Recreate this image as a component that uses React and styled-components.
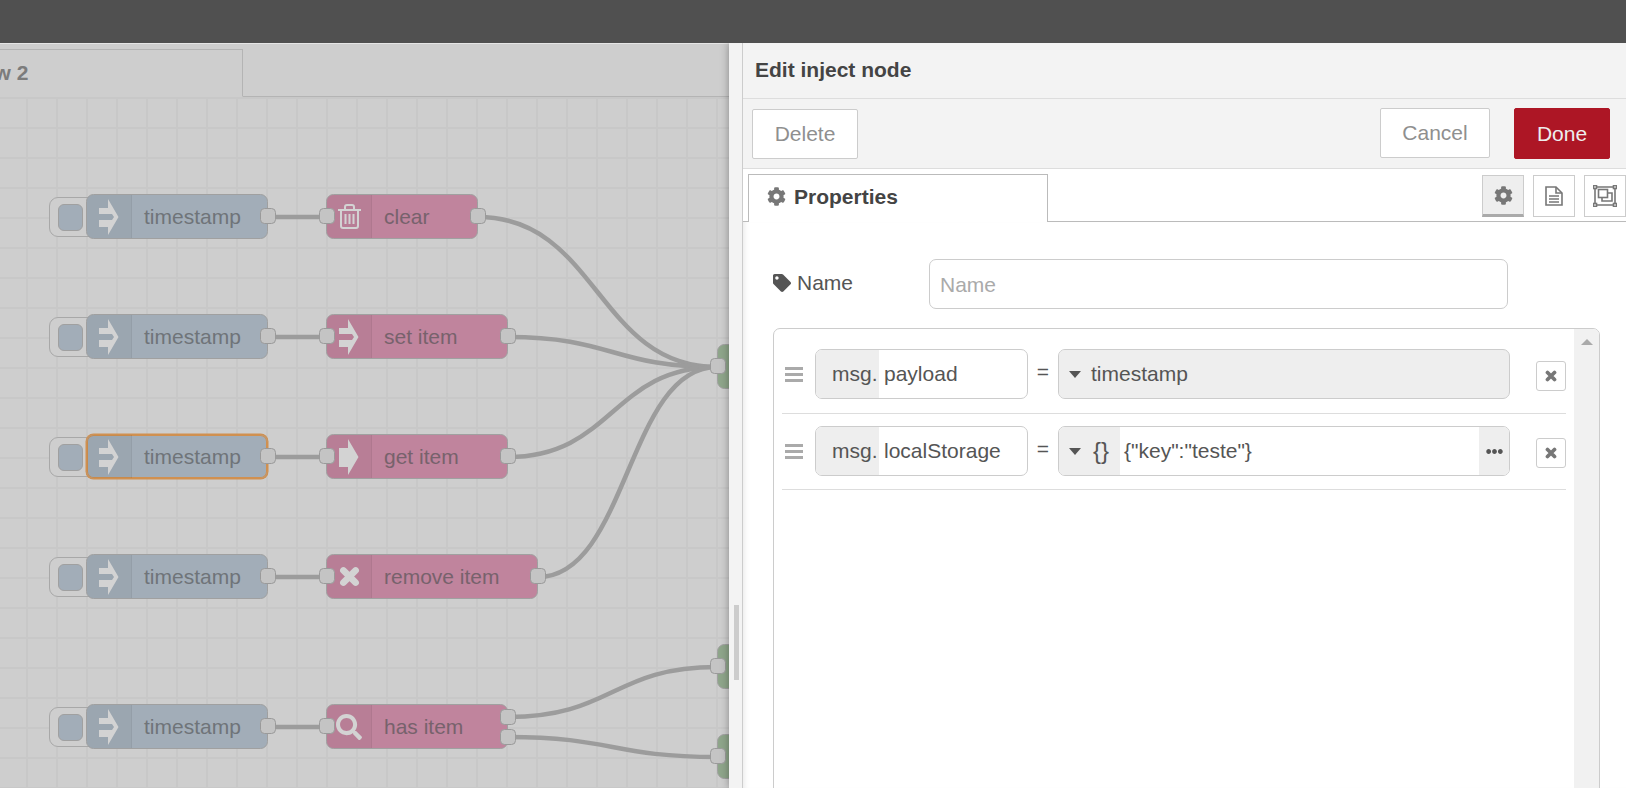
import React from 'react'
import styled, { createGlobalStyle } from 'styled-components'
import { FaCog, FaTag, FaSearch, FaEllipsisH } from 'react-icons/fa'

const GlobalStyle = createGlobalStyle`
  html, body { margin: 0; padding: 0; background: #fff; }
  body { font-family: "Liberation Sans", Arial, sans-serif; font-size: 21px; color: #555; }
  * { box-sizing: border-box; }
`

const Page = styled.div`
  width: 1626px;
  height: 788px;
  overflow: hidden;
  display: flex;
  flex-direction: column;
`

const TopBar = styled.div`
  height: 43px;
  flex: none;
  background: #505050;
  position: relative;
  z-index: 3;
`

const Main = styled.div`
  flex: 1;
  display: flex;
  min-height: 0;
`

const Workspace = styled.div`
  width: 729px;
  flex: none;
  display: flex;
  flex-direction: column;
  overflow: hidden;
  background: #cecece;
`

const TabBar = styled.div`
  height: 54px;
  flex: none;
  padding-top: 5px;
  border-top: 1px solid #e6e6e6;
  border-bottom: 1px solid #b4b4b4;
  display: flex;
`

const FlowTab = styled.div`
  width: 293px;
  margin-left: -50px;
  padding-left: 12px;
  height: 48px;
  border: 1px solid #b4b4b4;
  border-bottom: 1px solid #cecece;
  font-weight: bold;
  color: #7c7c7c;
  display: flex;
  align-items: center;
`

const Chart = styled.div`
  position: relative;
  flex: 1;
  background-color: #cecece;
  background-image:
    linear-gradient(to right, #c8c8c8 2px, transparent 2px),
    linear-gradient(to bottom, #c8c8c8 2px, transparent 2px);
  background-size: 30px 30px;
  background-position: 26px 0;
`

const Wires = styled.svg`
  position: absolute;
  left: 0;
  top: 0;
  width: 729px;
  height: 691px;
`

const Wire = styled.path`
  fill: none;
  stroke: #9c9c9c;
  stroke-width: 4.5px;
`

const FlowNode = styled.div`
  position: absolute;
  left: ${(p) => p.$x}px;
  top: ${(p) => p.$y - 97}px;
  width: ${(p) => p.$w}px;
  height: 45px;
  display: flex;
  align-items: center;
  background: ${(p) => p.$color};
  border: 1.5px solid ${(p) => (p.$selected ? '#d09050' : '#a0a0a0')};
  box-shadow: ${(p) => (p.$selected ? 'inset 0 0 0 1px #d09050, 0 0 0 0.5px #d09050' : 'none')};
  border-radius: 7.5px;
`

const NodeIcon = styled.div`
  width: 45px;
  height: 100%;
  flex: none;
  display: flex;
  align-items: center;
  justify-content: center;
  color: #d3d3d3;
  background: rgba(0, 0, 0, 0.04);
  border-right: 1.5px solid rgba(0, 0, 0, 0.05);
  border-radius: 6px 0 0 6px;
`

const NodeLabel = styled.span`
  padding-left: 12px;
  white-space: nowrap;
  color: ${(p) => (p.$pink ? '#77626c' : '#6f7479')};
`

const Port = styled.div`
  position: absolute;
  ${(p) => (p.$side === 'in' ? 'left: -8.5px;' : 'right: -8.5px;')}
  top: ${(p) => p.$top}px;
  width: 16px;
  height: 16px;
  background: #c4c4c4;
  border: 1.5px solid #9a9a9a;
  border-radius: 4.5px;
`

const InjectButton = styled.div`
  position: absolute;
  left: 49px;
  top: ${(p) => p.$y - 97 + 3}px;
  width: 50px;
  height: 40px;
  padding: 6px 0 0 8px;
  border: 1.5px solid #a8a8a8;
  border-radius: 9px 0 0 9px;
  background: #cecece;
`

const InjectSquare = styled.div`
  width: 25px;
  height: 27px;
  background: #a2adb8;
  border: 1.5px solid #a0a0a0;
  border-radius: 6px;
`

const Panel = styled.div`
  flex: 1;
  display: flex;
  position: relative;
  z-index: 2;
  box-shadow: 0 0 8px rgba(0, 0, 0, 0.35);
`

const Splitter = styled.div`
  width: 14px;
  flex: none;
  background: #f3f3f3;
  border-right: 1px solid #ccc;
  padding: 562px 0 0 5px;
`

const SplitterHandle = styled.div`
  width: 5px;
  height: 75px;
  background: #ccc;
`

const Tray = styled.div`
  flex: 1;
  min-width: 0;
  display: flex;
  flex-direction: column;
  background: #fff;
`

const TrayTitle = styled.div`
  height: 56px;
  flex: none;
  padding: 0 0 2px 12px;
  display: flex;
  align-items: center;
  font-weight: bold;
  color: #444;
  background: #f3f3f3;
  border-bottom: 1px solid #ddd;
`

const TrayToolbar = styled.div`
  height: 70px;
  flex: none;
  display: flex;
  justify-content: space-between;
  padding: 9px 16px 0 9px;
  background: #f3f3f3;
  border-bottom: 1px solid #ddd;
`

const ToolbarGroup = styled.div`
  display: flex;
  gap: 24px;
`

const TrayButton = styled.div`
  width: ${(p) => p.$w}px;
  height: ${(p) => (p.$primary ? 51 : 50)}px;
  margin-top: ${(p) => p.$top || 0}px;
  display: flex;
  align-items: center;
  justify-content: center;
  background: ${(p) => (p.$primary ? '#ad1625' : '#fff')};
  color: ${(p) => (p.$primary ? '#eee' : '#8f8f8f')};
  border: 1px solid ${(p) => (p.$primary ? '#ad1625' : '#ccc')};
  border-radius: 2px;
`

const TabRow = styled.div`
  height: 53px;
  flex: none;
  display: flex;
  justify-content: space-between;
  padding: 5px 0 0 5px;
  border-bottom: 1.5px solid #bbb;
`

const PropsTab = styled.div`
  width: 300px;
  height: 48px;
  display: flex;
  align-items: center;
  gap: 8px;
  padding: 0 0 4px 18px;
  font-weight: bold;
  color: #444;
  background: #fff;
  border: 1px solid #bbb;
  border-bottom: none;
  svg { color: #777; }
`

const TabButtons = styled.div`
  display: flex;
  gap: 9px;
  padding-top: 1px;
`

const TabButton = styled.div`
  width: 42px;
  height: 42px;
  display: flex;
  align-items: center;
  justify-content: center;
  color: #777;
  background: ${(p) => (p.$active ? '#eee' : '#fff')};
  border: 1px solid #ccc;
  border-bottom: ${(p) => (p.$active ? '3px solid #aaa' : '1px solid #ccc')};
`

const Form = styled.div`
  flex: 1;
  min-height: 0;
  padding: 37px 26px 0 30px;
  box-shadow: inset 6px 0 6px -5px rgba(0, 0, 0, 0.1);
`

const NameRow = styled.div`
  display: flex;
  align-items: center;
  margin-bottom: 19px;
`

const NameLabel = styled.label`
  width: 156px;
  display: flex;
  align-items: center;
  gap: 6px;
  padding-bottom: 3px;
  color: #555;
`

const NameInput = styled.div`
  width: 579px;
  height: 50px;
  padding: 2px 0 0 10px;
  display: flex;
  align-items: center;
  color: #aaa;
  border: 1px solid #ccc;
  border-radius: 7px;
`

const ListBox = styled.div`
  height: 500px;
  display: flex;
  border: 1px solid #ccc;
  border-radius: 7px;
  overflow: hidden;
`

const ListBody = styled.div`
  flex: 1;
  padding: 9px 8px 0 8px;
`

const ScrollTrack = styled.div`
  width: 25px;
  flex: none;
  padding: 10px 0 0 7px;
  background: #f1f1f1;
`

const ScrollArrow = styled.div`
  width: 0;
  height: 0;
  border-left: 6px solid transparent;
  border-right: 6px solid transparent;
  border-bottom: 6px solid #aaa;
`

const Row = styled.div`
  height: 76px;
  display: flex;
  align-items: flex-start;
  padding: ${(p) => (p.$first ? 11 : 12)}px 0 0 3px;
  border-bottom: 1px solid #ddd;
`

const Grip = styled.div`
  width: 18px;
  margin: 18px 12px 0 0;
  flex: none;
  display: flex;
  flex-direction: column;
  gap: 3px;
`

const GripBar = styled.span`
  display: block;
  height: 3px;
  background: #aaa;
`

const Field = styled.div`
  width: ${(p) => p.$w}px;
  height: 50px;
  flex: none;
  display: flex;
  align-items: stretch;
  overflow: hidden;
  color: #555;
  background: ${(p) => (p.$filled ? '#eee' : '#fff')};
  border: 1px solid #ccc;
  border-radius: 7px;
`

const MsgPrefix = styled.span`
  width: 63px;
  flex: none;
  padding-left: 16px;
  display: flex;
  align-items: center;
  background: #eee;
`

const FieldText = styled.span`
  flex: 1;
  padding-left: ${(p) => p.$pad}px;
  display: flex;
  align-items: center;
  white-space: nowrap;
`

const Equals = styled.span`
  width: 30px;
  flex: none;
  height: 50px;
  padding-bottom: 4px;
  display: flex;
  align-items: center;
  justify-content: center;
  color: #555;
`

const TypeSelect = styled.span`
  flex: none;
  width: ${(p) => p.$w}px;
  padding-left: 10px;
  display: flex;
  align-items: center;
  gap: 12px;
  font-size: 24px;
  background: #eee;
`

const Caret = styled.span`
  width: 0;
  height: 0;
  flex: none;
  border-left: 6.5px solid transparent;
  border-right: 6.5px solid transparent;
  border-top: 7px solid #555;
`

const ExpandButton = styled.span`
  width: 30px;
  flex: none;
  padding-left: 1px;
  display: flex;
  align-items: center;
  justify-content: center;
  color: #555;
  background: #eee;
`

const RemoveButton = styled.div`
  width: 30px;
  height: 30px;
  margin: 12px 0 0 26px;
  flex: none;
  display: flex;
  align-items: center;
  justify-content: center;
  color: #777;
  border: 1px solid #ccc;
  border-radius: 3px;
`

const ArrowIcon = ({ solid }) => (
  <svg width="20" height="36" viewBox="0 0 20 36" fill="currentColor">
    <path d={solid
      ? 'M0 9H9V0L19.5 18L9 36V28H0Z'
      : 'M0 9H9V0L19.5 18L9 36V28H0V21H13L15 18L13 15H0Z'} />
  </svg>
)

const TimesIcon = ({ size }) => (
  <svg width={size} height={size} viewBox="0 0 24 24" fill="none" stroke="currentColor" strokeWidth="7.5" strokeLinecap="round">
    <path d="M5 5L19 19M19 5L5 19" />
  </svg>
)

const TrashIcon = () => (
  <svg width="23" height="25" viewBox="0 0 23 25" fill="none" stroke="currentColor" strokeWidth="2">
    <path d="M0 6H23M7 6V3Q7 1 9 1H14Q16 1 16 3V6" />
    <path d="M3 6V22Q3 24 5 24H18Q20 24 20 22V6" />
    <path d="M7.5 10V20M11.5 10V20M15.5 10V20" />
  </svg>
)

const DocIcon = () => (
  <svg width="18" height="20" viewBox="0 0 18 20" fill="none" stroke="currentColor" strokeWidth="1.6">
    <path d="M1 1H11L17 7V19H1Z" />
    <path d="M11 1V7H17" />
    <path d="M4 10H14M4 13H14M4 16H14" />
  </svg>
)

const FrameIcon = () => (
  <svg width="24" height="22" viewBox="0 0 24 22" fill="none" stroke="currentColor" strokeWidth="1.6">
    <path d="M3 2H21M3 20H21M2 3V19M22 3V19" />
    <rect x="0.5" y="0.5" width="3" height="3" />
    <rect x="20.5" y="0.5" width="3" height="3" />
    <rect x="0.5" y="18.5" width="3" height="3" />
    <rect x="20.5" y="18.5" width="3" height="3" />
    <rect x="5.5" y="4.5" width="9" height="8" />
    <path d="M14.5 8H19V16H9V12.5" />
  </svg>
)

const BLUE = '#a2adb8'
const PINK = '#c0849d'
const GREEN = '#8ea58a'

const nodeRows = [
  { y: 194, label: 'clear', w: 152, icon: <TrashIcon /> },
  { y: 314, label: 'set item', w: 182, icon: <ArrowIcon /> },
  { y: 434, label: 'get item', w: 182, icon: <ArrowIcon solid />, selected: true },
  { y: 554, label: 'remove item', w: 212, icon: <TimesIcon size={21} /> },
  { y: 704, label: 'has item', w: 182, icon: <FaSearch size={26} />, outs: [4, 24] },
]

const curve = (x1, y1, x2, y2) => {
  const d = (x2 - x1) * 0.5
  return `M${x1} ${y1}C${x1 + d} ${y1} ${x2 - d} ${y2} ${x2} ${y2}`
}

const wires = [
  curve(478, 217, 717, 367),
  curve(508, 337, 717, 367),
  curve(508, 457, 717, 367),
  curve(538, 577, 717, 367),
  curve(508, 717, 717, 667),
  curve(508, 737, 717, 757),
]

const App = () => {
  return (
    <Page>
      <GlobalStyle />
      <TopBar />
      <Main>
        <Workspace>
          <TabBar>
            <FlowTab>Flow 2</FlowTab>
          </TabBar>
          <Chart>
            <Wires viewBox="0 97 729 691">
              {nodeRows.map((r) => (
                <Wire key={r.y} d={`M267 ${r.y + 23}H327`} />
              ))}
              {wires.map((d) => (
                <Wire key={d} d={d} />
              ))}
            </Wires>
            {nodeRows.map((r) => (
              <React.Fragment key={r.y}>
                <InjectButton $y={r.y}>
                  <InjectSquare />
                </InjectButton>
                <FlowNode $x={86} $y={r.y} $w={182} $color={BLUE} $selected={r.selected}>
                  <NodeIcon><ArrowIcon /></NodeIcon>
                  <NodeLabel>timestamp</NodeLabel>
                  <Port $side="out" $top={13} />
                </FlowNode>
                <FlowNode $x={326} $y={r.y} $w={r.w} $color={PINK}>
                  <Port $side="in" $top={13} />
                  <NodeIcon>{r.icon}</NodeIcon>
                  <NodeLabel $pink>{r.label}</NodeLabel>
                  {(r.outs || [13]).map((t) => (
                    <Port key={t} $side="out" $top={t} />
                  ))}
                </FlowNode>
              </React.Fragment>
            ))}
            {[344, 644, 734].map((y) => (
              <FlowNode key={y} $x={717} $y={y} $w={100} $color={GREEN}>
                <Port $side="in" $top={13} />
              </FlowNode>
            ))}
          </Chart>
        </Workspace>
        <Panel>
          <Splitter>
            <SplitterHandle />
          </Splitter>
          <Tray>
            <TrayTitle>Edit inject node</TrayTitle>
            <TrayToolbar>
              <TrayButton $w={106} $top={1}>Delete</TrayButton>
              <ToolbarGroup>
                <TrayButton $w={110}>Cancel</TrayButton>
                <TrayButton $w={96} $primary>Done</TrayButton>
              </ToolbarGroup>
            </TrayToolbar>
            <TabRow>
              <PropsTab><FaCog size={19} />Properties</PropsTab>
              <TabButtons>
                <TabButton $active><FaCog size={19} /></TabButton>
                <TabButton><DocIcon /></TabButton>
                <TabButton><FrameIcon /></TabButton>
              </TabButtons>
            </TabRow>
            <Form>
              <NameRow>
                <NameLabel><FaTag size={18} />Name</NameLabel>
                <NameInput>Name</NameInput>
              </NameRow>
              <ListBox>
                <ListBody>
                  <Row $first>
                    <Grip><GripBar /><GripBar /><GripBar /></Grip>
                    <Field $w={213}>
                      <MsgPrefix>msg.</MsgPrefix>
                      <FieldText $pad={5}>payload</FieldText>
                    </Field>
                    <Equals>=</Equals>
                    <Field $w={452} $filled>
                      <TypeSelect $w={32}><Caret /></TypeSelect>
                      <FieldText $pad={0}>timestamp</FieldText>
                    </Field>
                    <RemoveButton><TimesIcon size={12} /></RemoveButton>
                  </Row>
                  <Row>
                    <Grip><GripBar /><GripBar /><GripBar /></Grip>
                    <Field $w={213}>
                      <MsgPrefix>msg.</MsgPrefix>
                      <FieldText $pad={5}>localStorage</FieldText>
                    </Field>
                    <Equals>=</Equals>
                    <Field $w={452}>
                      <TypeSelect $w={61}><Caret />{'{}'}</TypeSelect>
                      <FieldText $pad={4}>{'{"key":"teste"}'}</FieldText>
                      <ExpandButton><FaEllipsisH size={17} /></ExpandButton>
                    </Field>
                    <RemoveButton><TimesIcon size={12} /></RemoveButton>
                  </Row>
                </ListBody>
                <ScrollTrack><ScrollArrow /></ScrollTrack>
              </ListBox>
            </Form>
          </Tray>
        </Panel>
      </Main>
    </Page>
  )
}

export default App
